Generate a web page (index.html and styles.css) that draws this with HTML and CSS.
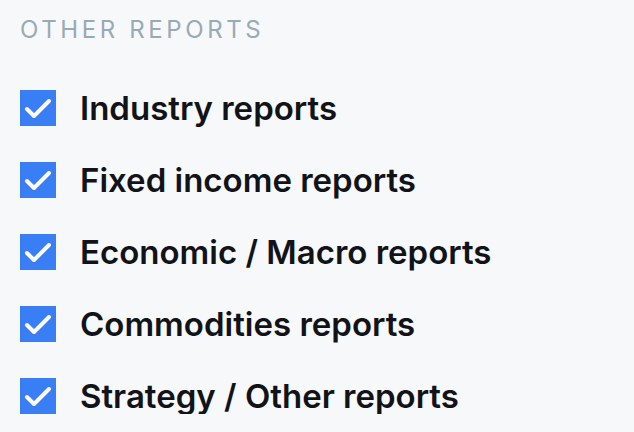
FILE: index.html
```html
<!DOCTYPE html>
<html lang="en">
<head>
  <meta charset="UTF-8" />
  <title>Other reports</title>
  <link rel="stylesheet" href="styles.css">
</head>
<body>
  <div class="reports">
    <h3 class="reports-title">Other reports</h3>
    <ul class="report-list">
      <li class="report-item">
        <span class="check"><svg viewBox="0 0 36 36"><path d="M7 19l7 7 15-15" /></svg></span>
        <span class="report-label">Industry reports</span>
      </li>
      <li class="report-item">
        <span class="check"><svg viewBox="0 0 36 36"><path d="M7 19l7 7 15-15" /></svg></span>
        <span class="report-label">Fixed income reports</span>
      </li>
      <li class="report-item">
        <span class="check"><svg viewBox="0 0 36 36"><path d="M7 19l7 7 15-15" /></svg></span>
        <span class="report-label">Economic / Macro reports</span>
      </li>
      <li class="report-item">
        <span class="check"><svg viewBox="0 0 36 36"><path d="M7 19l7 7 15-15" /></svg></span>
        <span class="report-label">Commodities reports</span>
      </li>
      <li class="report-item">
        <span class="check"><svg viewBox="0 0 36 36"><path d="M7 19l7 7 15-15" /></svg></span>
        <span class="report-label">Strategy / Other reports</span>
      </li>
    </ul>
  </div>
</body>
</html>
```

FILE: styles.css
```css
html, body {
  margin: 0;
  background: #f7f8fa;
  font-family: Inter, Roboto, "Liberation Sans", sans-serif;
}
.reports {
  padding: 14px 20px 0;
}
.reports-title {
  margin: 0;
  font-size: 24px;
  font-weight: 400;
  line-height: 32px;
  letter-spacing: 3.6px;
  text-transform: uppercase;
  color: #97aab6;
}
.report-list {
  list-style: none;
  margin: 44px 0 0;
  padding: 0;
  display: flex;
  flex-direction: column;
  gap: 36px;
}
.report-item {
  display: flex;
  align-items: center;
  gap: 24px;
  height: 36px;
}
.check {
  width: 36px;
  height: 36px;
  background: #3a7ef6;
  flex: none;
}
.check svg {
  display: block;
  width: 36px;
  height: 36px;
}
.check path {
  fill: none;
  stroke: #fff;
  stroke-width: 4;
  stroke-linecap: round;
  stroke-linejoin: round;
}
.report-label {
  font-size: 33px;
  font-weight: 600;
  color: #111318;
}
```
